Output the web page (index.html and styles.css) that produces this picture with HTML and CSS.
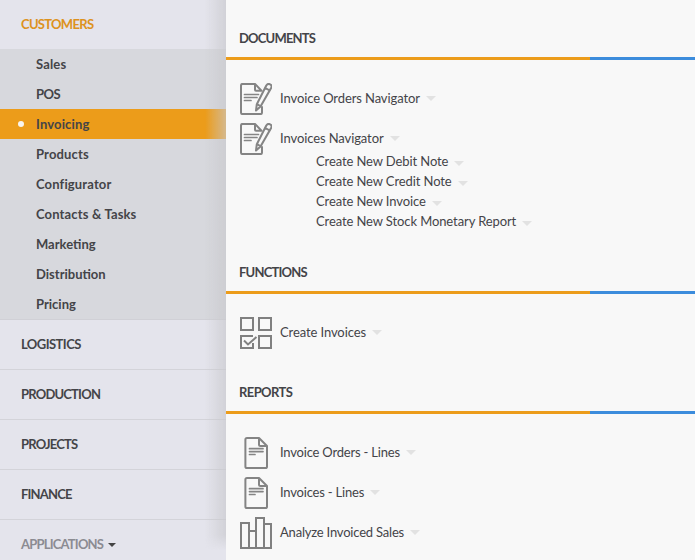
FILE: index.html
```html
<!DOCTYPE html>
<html lang="en">
<head>
<meta charset="utf-8">
<title>Invoicing</title>
<link rel="stylesheet" href="styles.css">
</head>
<body>
<svg class="defs" width="0" height="0" aria-hidden="true">
  <symbol id="edit-doc" viewBox="0 0 32 32">
    <g fill="none" stroke="#848484" stroke-width="2" stroke-linejoin="round" stroke-linecap="round">
      <path d="M22 24v5.500q0 1.600-1.600 1.600H2.600Q1 31.100 1 29.500V2.500Q1 .9 2.600.9H15l6.500 6.800M15 1v5.800q0 1 1 1h5.500"/>
      <path d="M4.500 11.500h14M4.500 14.500h12.500M4.500 17.500h6.500" stroke-width="1.700"/>
      <path d="M26.300 2.500q1.500-2.400 3.800-1.200t1.100 3.500L20.500 23.500 16 27.500l.8-6.300zM25 4.800l4.800 2.700M17 21l3.600 2.400"/>
    </g>
  </symbol>
  <symbol id="doc" viewBox="0 0 32 32">
    <g fill="none" stroke="#848484" stroke-width="2" stroke-linejoin="round" stroke-linecap="round">
      <path d="M19 1H7Q5.400 1 5.400 2.600v26.800Q5.400 31 7 31h18.400q1.600 0 1.600-1.600V9zM19 1v6.500Q19 9 20.500 9H27"/>
      <path d="M9.500 11.700h13.500M9.500 14.600h13.500M9.500 17.500h5.500" stroke-width="1.700"/>
    </g>
  </symbol>
  <symbol id="tasks" viewBox="0 0 32 32">
    <g fill="none" stroke="#808080" stroke-width="2">
      <path d="M1 1h12v12H1zM19 1h12v12H19zM19 19h12v12H19zM13 19H1v12h12v-5"/>
      <path d="M4 23.500l4 4 8.500-7.500"/>
    </g>
  </symbol>
  <symbol id="chart" viewBox="0 0 32 32">
    <path fill="none" stroke="#808080" stroke-width="2" d="M1 31V6h8v25M9 14h7M16 31V1h8v30M24 7h7v24M0 31h32"/>
  </symbol>
</svg>
<div class="app">
  <nav class="sidebar">
    <div class="module active">CUSTOMERS</div>
    <ul class="submenu">
      <li class="loose">Sales</li>
      <li class="narrow">POS</li>
      <li class="selected loose">Invoicing</li>
      <li class="loose">Products</li>
      <li class="loose">Configurator</li>
      <li class="loose">Contacts &amp; Tasks</li>
      <li>Marketing</li>
      <li>Distribution</li>
      <li>Pricing</li>
    </ul>
    <div class="module narrow">LOGISTICS</div>
    <div class="module">PRODUCTION</div>
    <div class="module">PROJECTS</div>
    <div class="module">FINANCE</div>
    <div class="module apps">APPLICATIONS<i class="caret"></i></div>
  </nav>
  <main class="content">
    <section class="documents">
      <h2>DOCUMENTS</h2>
      <div class="rule"></div>
      <div class="row"><svg class="icon"><use href="#edit-doc"/></svg><span>Invoice Orders Navigator</span><i class="drop"></i></div>
      <div class="row"><svg class="icon"><use href="#edit-doc"/></svg><span>Invoices Navigator</span><i class="drop"></i></div>
      <ul class="actions">
        <li><span>Create New Debit Note</span><i class="drop"></i></li>
        <li><span>Create New Credit Note</span><i class="drop"></i></li>
        <li><span>Create New Invoice</span><i class="drop"></i></li>
        <li><span>Create New Stock Monetary Report</span><i class="drop"></i></li>
      </ul>
    </section>
    <section class="functions">
      <h2>FUNCTIONS</h2>
      <div class="rule"></div>
      <div class="row"><svg class="icon"><use href="#tasks"/></svg><span>Create Invoices</span><i class="drop"></i></div>
    </section>
    <section class="reports">
      <h2>REPORTS</h2>
      <div class="rule"></div>
      <div class="row"><svg class="icon"><use href="#doc"/></svg><span>Invoice Orders - Lines</span><i class="drop"></i></div>
      <div class="row"><svg class="icon"><use href="#doc"/></svg><span>Invoices - Lines</span><i class="drop"></i></div>
      <div class="row"><svg class="icon"><use href="#chart"/></svg><span>Analyze Invoiced Sales</span><i class="drop"></i></div>
    </section>
  </main>
</div>
</body>
</html>
```

FILE: styles.css
```css
* { box-sizing: border-box; }
body { margin: 0; overflow: hidden; font: 13px/20px Lato, "Liberation Sans", sans-serif; color: #444448; }
ul { list-style: none; margin: 0; padding: 0; }
.defs { position: absolute; }
.app { display: flex; width: 695px; height: 560px; overflow: hidden; background: #f8f8f8; }

.sidebar { position: relative; flex: 0 0 226px; background: #e4e4ec; font-weight: 700; }
.sidebar::after { content: ""; position: absolute; top: 0; right: 0; width: 21px; height: 550px; background: linear-gradient(to right, rgba(200,200,204,0), rgba(200,200,204,.65)); -webkit-mask-image: linear-gradient(#000 535px, transparent 550px); mask-image: linear-gradient(#000 535px, transparent 550px); }
.module { height: 50px; padding: 14px 0 0 21px; border-bottom: 1px solid #d3d3d9; letter-spacing: -.8px; }
.module.active { height: 49px; border-bottom: 0; color: #dd9220; letter-spacing: -.7px; }
.module.narrow, .submenu .narrow { letter-spacing: -.55px; }
.submenu { background: #d7d8dd; height: 271px; border-bottom: 1px solid #d0d0d6; }
.submenu li { height: 30px; padding: 5px 0 0 36px; }
.submenu .loose { letter-spacing: .15px; }
.submenu .selected { position: relative; background: #ec9c1a; }
.selected::before { content: ""; position: absolute; left: 18px; top: 12px; width: 6px; height: 6px; border-radius: 50%; background: #f8f4ee; }
.apps { display: flex; border-bottom: 0; color: #8b8b92; }
.caret { margin: 9px 0 0 5px; width: 0; height: 0; border: 4px solid transparent; border-top-color: #444; border-bottom: 0; }

.content { flex: 1; letter-spacing: -.1px; }
h2 { margin: 0; padding: 0 0 9px 13px; font: inherit; font-weight: 700; letter-spacing: -.8px; }
.documents { padding-top: 28px; }
.functions { padding-top: 31px; }
.reports { padding-top: 29px; }
.reports h2 { letter-spacing: -.6px; }
.rule { height: 3px; margin-bottom: 19px; background: linear-gradient(to right, #ec9c1a 364px, #3c8cdc 364px); }
.row { display: flex; align-items: center; height: 40px; padding-left: 14px; }
.row span, .row .drop { margin-top: -2px; }
.reports .row { letter-spacing: -.2px; }
.icon { width: 32px; height: 32px; margin-right: 8px; }
.drop { width: 0; height: 0; margin-left: 6px; border: 5px solid transparent; border-top: 5px solid #e2e2e2; border-bottom: 0; }
.actions { margin-top: -8px; padding-left: 90px; }
.actions li { display: flex; align-items: center; height: 20px; }
.actions .drop { margin-top: 4px; }
```
